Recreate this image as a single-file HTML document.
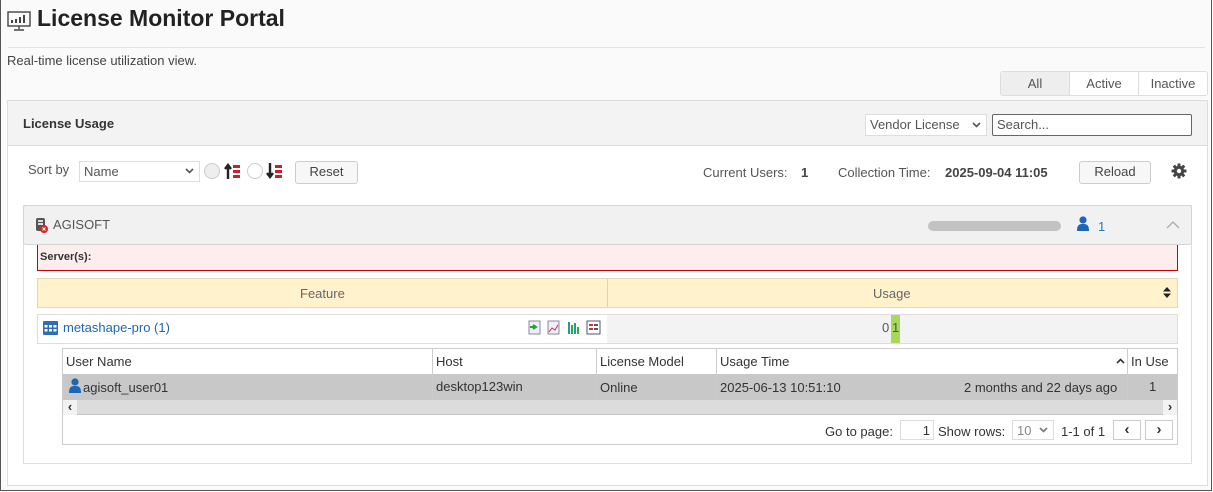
<!DOCTYPE html>
<html><head><meta charset="utf-8"><style>
*{box-sizing:border-box;margin:0;padding:0}
body{width:1213px;height:492px;overflow:hidden;background:#fff;font-family:"Liberation Sans",sans-serif;font-size:13px;color:#333;position:relative}
.a{position:absolute}
.frame{left:0;top:0;width:1212px;height:491px;border:1px solid #555;border-top:none;background:#fafafa}
.btn{border:1px solid #ccc;border-radius:3px;background:#f7f7f7;text-align:center;line-height:20px;color:#444}
.inp{border:1px solid #ddd;background:#fff;color:#555;padding-left:4px;line-height:19px}
</style></head><body>
<div class="a frame"></div>
<svg class="a" style="left:7px;top:11px" width="24" height="20" viewBox="0 0 24 20"><rect x="1" y="1" width="22" height="14" fill="none" stroke="#444" stroke-width="1.4"/><rect x="4" y="9" width="2" height="3" fill="#444"/><rect x="8" y="8" width="2" height="4" fill="#444"/><rect x="12" y="6" width="2" height="6" fill="#444"/><rect x="16" y="4" width="2" height="8" fill="#444"/><path d="M12 15v3M7 19h10" stroke="#444" stroke-width="1.4"/></svg>
<div class="a" style="left:37px;top:5px;font-size:23px;font-weight:bold;color:#222">License Monitor Portal</div>
<div class="a" style="left:8px;top:47px;width:1197px;height:1px;background:#e3e3e3"></div>
<div class="a" style="left:7px;top:53px;color:#444">Real-time license utilization view.</div>
<div class="a" style="left:1000px;top:71px;width:208px;height:25px;border:1px solid #ddd;border-radius:3px;background:#fff;display:flex;color:#555;line-height:23px">
<div style="width:69px;background:#eee;text-align:center;border-right:1px solid #ddd">All</div><div style="width:69px;text-align:center;border-right:1px solid #ddd">Active</div><div style="flex:1;text-align:center">Inactive</div></div>
<div class="a" style="left:7px;top:100px;width:1201px;height:386px;border:1px solid #ddd;background:#fff"></div>
<div class="a" style="left:8px;top:101px;width:1199px;height:45px;background:#f3f3f3;border-bottom:1px solid #ddd"></div>
<div class="a" style="left:23px;top:116px;font-weight:bold;color:#333">License Usage</div>
<div class="a inp" style="left:865px;top:114px;width:122px;height:22px;border-color:#ddd;color:#555">Vendor License</div>
<svg class="a" style="left:972px;top:122px" width="9" height="6"><path d="M1 1l3.5 3.5L8 1" stroke="#555" stroke-width="1.6" fill="none"/></svg>
<div class="a inp" style="left:992px;top:114px;width:200px;height:22px;border-color:#666;border-radius:2px">Search...</div>
<div class="a" style="left:28px;top:162px;color:#555">Sort by</div>
<div class="a inp" style="left:79px;top:161px;width:121px;height:21px">Name</div>
<svg class="a" style="left:185px;top:168px" width="9" height="6"><path d="M1 1l3.5 3.5L8 1" stroke="#555" stroke-width="1.6" fill="none"/></svg>
<div class="a" style="left:204px;top:163px;width:16px;height:16px;border-radius:50%;border:1px solid #ccc;background:#eee"></div>
<div class="a" style="left:247px;top:163px;width:16px;height:16px;border-radius:50%;border:1px solid #ccc;background:#fff"></div>
<svg class="a" style="left:224px;top:162px" width="18" height="18"><path d="M4 17V5M1 7l3-4 3 4" stroke="#222" stroke-width="2.4" fill="none"/><rect x="9" y="3" width="7" height="3" fill="#c8202c"/><rect x="9" y="8" width="7" height="3" fill="#c8202c"/><rect x="9" y="13" width="7" height="3" fill="#c8202c"/></svg>
<svg class="a" style="left:266px;top:162px" width="18" height="18"><path d="M4 1v12M1 11l3 4 3-4" stroke="#222" stroke-width="2.4" fill="none"/><rect x="9" y="3" width="7" height="3" fill="#c8202c"/><rect x="9" y="8" width="7" height="3" fill="#c8202c"/><rect x="9" y="13" width="7" height="3" fill="#c8202c"/></svg>
<div class="a btn" style="left:295px;top:161px;width:63px;height:23px">Reset</div>
<div class="a" style="left:703px;top:165px;color:#555">Current Users:</div>
<div class="a" style="left:801px;top:165px;font-weight:bold;color:#444">1</div>
<div class="a" style="left:838px;top:165px;color:#555">Collection Time:</div>
<div class="a" style="left:945px;top:165px;font-weight:bold;color:#444">2025-09-04 11:05</div>
<div class="a btn" style="left:1079px;top:161px;width:72px;height:23px">Reload</div>
<svg class="a" style="left:1171px;top:163px" width="16" height="16" viewBox="0 0 16 16"><g fill="#444"><circle cx="8" cy="8" r="5.2"/><rect x="6.5" y="0.5" width="3" height="15" rx="0.6"/><rect x="0.5" y="6.5" width="15" height="3" rx="0.6"/><rect x="6.5" y="0.5" width="3" height="15" rx="0.6" transform="rotate(45 8 8)"/><rect x="6.5" y="0.5" width="3" height="15" rx="0.6" transform="rotate(-45 8 8)"/></g><circle cx="8" cy="8" r="2.2" fill="#fff"/></svg>
<div class="a" style="left:23px;top:205px;width:1169px;height:259px;border:1px solid #ddd;background:#fff"></div>
<div class="a" style="left:23px;top:205px;width:1169px;height:40px;border:1px solid #d4d4d4;border-radius:3px;background:#f1f1f1"></div>
<svg class="a" style="left:35px;top:217px" width="14" height="17"><rect x="1" y="1" width="9" height="13" rx="2" fill="#555"/><rect x="3" y="3" width="5" height="2" fill="#ddd"/><rect x="3" y="6" width="5" height="2" fill="#ddd"/><circle cx="9" cy="12" r="4" fill="#d22"/><path d="M7.5 10.5l3 3M10.5 10.5l-3 3" stroke="#fff" stroke-width="1"/></svg>
<div class="a" style="left:53px;top:217px;color:#555">AGISOFT</div>
<div class="a" style="left:928px;top:221px;width:133px;height:10px;border-radius:5px;background:#c2c2c2"></div>
<svg class="a" style="left:1076px;top:216px" width="14" height="15"><circle cx="7" cy="4" r="3.6" fill="#1e66b4"/><path d="M1 15c0-6 2-7 6-7s6 1 6 7z" fill="#1e66b4"/></svg>
<div class="a" style="left:1098px;top:219px;color:#1e79c8">1</div>
<svg class="a" style="left:1166px;top:220px" width="14" height="9"><path d="M1 8l6-6 6 6" stroke="#aaa" stroke-width="1.3" fill="none"/></svg>
<div class="a" style="left:37px;top:245px;width:1141px;height:26px;background:#fdeded;border:1px solid #c00;border-top:none"></div>
<div class="a" style="left:40px;top:251px;font-size:11px;font-weight:bold;color:#333">Server(s):</div>
<div class="a" style="left:37px;top:278px;width:1141px;height:30px;background:#fff2cc;border:1px solid #e3d9b8"></div>
<div class="a" style="left:607px;top:279px;width:1px;height:28px;background:#e0d3ae"></div>
<div class="a" style="left:300px;top:286px;color:#666">Feature</div>
<div class="a" style="left:873px;top:286px;color:#666">Usage</div>
<svg class="a" style="left:1163px;top:287px" width="8" height="11"><path d="M0 4.5L4 0l4 4.5zM0 6.5L4 11l4-4.5z" fill="#222"/></svg>
<div class="a" style="left:37px;top:314px;width:571px;height:30px;border:1px solid #ddd;background:#fff"></div>
<div class="a" style="left:607px;top:314px;width:571px;height:30px;border:1px solid #ddd;border-left:none;background:#f3f3f3"></div>
<svg class="a" style="left:43px;top:321px" width="15" height="14"><rect x="0" y="0" width="15" height="14" rx="1" fill="#2c6cb8"/><g fill="#fff"><rect x="1.5" y="4" width="3" height="2.5"/><rect x="6" y="4" width="3" height="2.5"/><rect x="10.5" y="4" width="3" height="2.5"/><rect x="1.5" y="8" width="3" height="2.5"/><rect x="6" y="8" width="3" height="2.5"/><rect x="10.5" y="8" width="3" height="2.5"/></g></svg>
<div class="a" style="left:63px;top:320px;color:#1e66b4">metashape-pro (1)</div>
<svg class="a" style="left:528px;top:320px" width="75" height="15"><rect x="1" y="1" width="11" height="13" fill="#eef" stroke="#889"/><path d="M2 7h5M5 5l3 2-3 2" stroke="#2a2" stroke-width="2" fill="none"/><rect x="20" y="1" width="11" height="13" fill="#eef" stroke="#889"/><path d="M21 12l3-4 3 2 3-5" stroke="#c33" fill="none"/><rect x="40" y="2" width="2" height="12" fill="#29a"/><rect x="43" y="5" width="2" height="9" fill="#3a3"/><rect x="46" y="3" width="2" height="11" fill="#29a"/><rect x="49" y="7" width="2" height="7" fill="#3a3"/><rect x="59" y="1" width="13" height="13" fill="#fff" stroke="#556"/><rect x="61" y="4" width="4" height="2" fill="#c33"/><rect x="66" y="4" width="4" height="2" fill="#556"/><rect x="61" y="8" width="4" height="2" fill="#c33"/><rect x="66" y="8" width="4" height="2" fill="#556"/></svg>
<div class="a" style="left:882px;top:320px;color:#555">0</div>
<div class="a" style="left:891px;top:315px;width:9px;height:28px;background:#a8d85a;color:#555;padding-top:5px;padding-left:1px">1</div>
<div class="a" style="left:62px;top:348px;width:1116px;height:97px;border:1px solid #ccc;background:#fff"></div>
<div class="a" style="left:63px;top:374px;width:1114px;height:26px;background:#c8c8c8"></div>
<div class="a" style="left:63px;top:400px;width:1114px;height:15px;background:#dcdcdc;border-bottom:1px solid #c4c4c4"></div>
<div class="a" style="left:63px;top:400px;width:14px;height:15px;background:#f2f2f2;font-size:13px;font-weight:bold;text-align:center;line-height:14px">&#8249;</div>
<div class="a" style="left:1163px;top:400px;width:14px;height:15px;background:#f2f2f2;font-size:13px;font-weight:bold;text-align:center;line-height:14px">&#8250;</div>
<div class="a" style="left:432px;top:349px;width:1px;height:51px;background:#ccc"></div>
<div class="a" style="left:596px;top:349px;width:1px;height:51px;background:#ccc"></div>
<div class="a" style="left:716px;top:349px;width:1px;height:51px;background:#ccc"></div>
<div class="a" style="left:1127px;top:349px;width:1px;height:51px;background:#ccc"></div>
<div class="a" style="left:66px;top:354px">User Name</div>
<div class="a" style="left:436px;top:354px">Host</div>
<div class="a" style="left:600px;top:354px">License Model</div>
<div class="a" style="left:720px;top:354px">Usage Time</div>
<svg class="a" style="left:1116px;top:358px" width="9" height="6"><path d="M1 5l3.5-3.5L8 5" stroke="#333" stroke-width="1.6" fill="none"/></svg>
<div class="a" style="left:1131px;top:354px">In Use</div>
<svg class="a" style="left:68px;top:378px" width="14" height="15"><circle cx="7" cy="4" r="3.6" fill="#1e66b4"/><path d="M1 15c0-6 2-7 6-7s6 1 6 7z" fill="#1e66b4"/></svg>
<div class="a" style="left:83px;top:380px">agisoft_user01</div>
<div class="a" style="left:436px;top:379px">desktop123win</div>
<div class="a" style="left:600px;top:380px">Online</div>
<div class="a" style="left:720px;top:380px">2025-06-13 10:51:10</div>
<div class="a" style="left:964px;top:380px">2 months and 22 days ago</div>
<div class="a" style="left:1149px;top:379px">1</div>
<div class="a" style="left:825px;top:424px">Go to page:</div>
<div class="a inp" style="left:900px;top:420px;width:34px;height:20px;text-align:right;padding-right:3px;color:#333">1</div>
<div class="a" style="left:938px;top:424px">Show rows:</div>
<div class="a inp" style="left:1012px;top:420px;width:42px;height:20px;color:#888">10</div>
<svg class="a" style="left:1039px;top:427px" width="9" height="6"><path d="M1 1l3.5 3.5L8 1" stroke="#777" stroke-width="1.6" fill="none"/></svg>
<div class="a" style="left:1061px;top:424px">1-1 of 1</div>
<div class="a" style="left:1113px;top:420px;width:28px;height:20px;border:1px solid #ccc;text-align:center;line-height:17px;font-size:15px;font-weight:bold">&#8249;</div>
<div class="a" style="left:1145px;top:420px;width:28px;height:20px;border:1px solid #ccc;text-align:center;line-height:17px;font-size:15px;font-weight:bold">&#8250;</div>
</body></html>
